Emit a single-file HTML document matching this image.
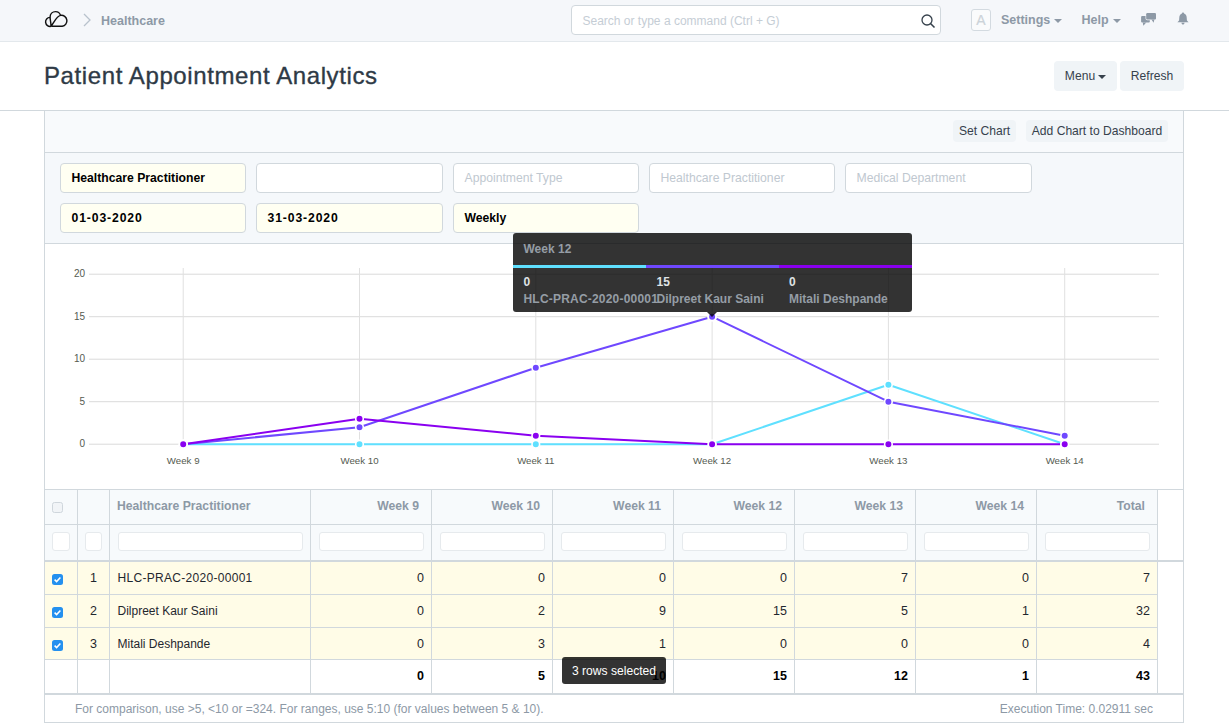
<!DOCTYPE html>
<html><head><meta charset="utf-8">
<style>
*{box-sizing:border-box;margin:0;padding:0}
html,body{width:1229px;height:727px;overflow:hidden;background:#fff;font-family:"Liberation Sans",sans-serif;color:#36414c;position:relative}
.abs{position:absolute}
#nav{left:0;top:0;width:1229px;height:42px;background:#f5f7fa;border-bottom:1px solid #e3e8ec}
.crumb{font-weight:bold;color:#8d99a6;font-size:12.5px}
.search{left:571px;top:5px;width:370px;height:30px;border:1px solid #d1d8dd;border-radius:4px;background:#fff}
.search span{position:absolute;left:10.5px;top:8px;font-size:12px;color:#c5cdd5}
.avatar{left:971px;top:9px;width:20px;height:22px;border:1px solid #d3dae0;border-radius:3px;background:#fafbfc;color:#ccd3d9;font-size:14px;text-align:center;line-height:20px;-webkit-text-stroke:0.2px #ccd3d9}
.navlink{font-weight:bold;color:#8d99a6;font-size:12.5px}
.caret{display:inline-block;width:0;height:0;border-left:4px solid transparent;border-right:4px solid transparent;border-top:4px solid #8d99a6;vertical-align:middle;margin-left:4px}
#title{left:44px;top:62px;font-size:24px;letter-spacing:0.6px;color:#2e3a46;white-space:nowrap;-webkit-text-stroke:0.35px #2e3a46}
.btn{background:#f0f4f7;border-radius:4px;color:#36414c;font-size:12.1px;text-align:center}
#headborder{left:0;top:110px;width:1229px;height:1px;background:#d1d8dd}
#report{left:44px;top:110px;width:1140px;height:613px;border:1px solid #d1d8dd;border-top:none}
#chartact{left:45px;top:111px;width:1138px;height:42px;background:#f8fafc;border-bottom:1px solid #d1d8dd}
#filters{left:45px;top:153px;width:1138px;height:91px;background:#f5f8fb;border-bottom:1px solid #d1d8dd}
.inp{height:30px;border:1px solid #d1d8dd;border-radius:4px;background:#fff;font-size:12.2px;padding-left:10.5px;line-height:29px;white-space:nowrap}
.dg{letter-spacing:0.88px}
.inp.y{background:#fffff2;font-weight:bold;color:#000}
.inp.ph{color:#c0c8d0}
.ax{font-size:10px;fill:#555b51;font-family:"Liberation Sans",sans-serif}
.th{font-weight:bold;color:#8d99a6;font-size:12.2px;white-space:nowrap}
.fi{background:#fff;border:1px solid #e6eaed;border-radius:3px}
.cb{width:11px;height:11px;background:#2490ef;border-radius:2.5px}
.cb svg{display:block}
.td{font-size:12.5px;color:#1f272e;white-space:nowrap}
.td.nm{font-size:12px}
.td.b{font-weight:bold;color:#000}
.foot{font-size:12px;color:#8d99a6;white-space:nowrap}
.toast{background:rgba(0,0,0,0.8);color:#fff;border-radius:3px;font-size:12.1px;text-align:center;line-height:29px}
.tip{left:513px;top:233px;width:399px;height:78.5px;background:rgba(0,0,0,0.8);border-radius:3px}
.tipt{font-weight:bold;color:#959da5;font-size:12px;white-space:nowrap}
.tipv{font-weight:bold;color:#dfe2e5;font-size:12px;white-space:nowrap}
</style></head><body>

<!-- navbar -->
<div id="nav" class="abs"></div>
<svg class="abs" style="left:40px;top:5px" width="35" height="27" viewBox="40 5 35 27">
<path d="M51 26.3 L62.2 26.3 A5 5 0 1 0 60.6 15.4 M60.6 15.4 C59.6 12.6 57.6 11.6 55.6 11.6 C52.2 11.6 50.1 14 50.1 17 C50.1 20.5 51.2 23.5 51 26.3 M60.6 15.4 C56.5 16.2 54.5 21.8 51 26.3 M49.9 17.4 A4.5 4.5 0 1 0 51 26.3" fill="none" stroke="#111" stroke-width="1.45" stroke-linejoin="round"/>
</svg>
<svg class="abs" style="left:82px;top:12px" width="10" height="16" viewBox="0 0 10 16"><path d="M2 2 L8 8 L2 14" fill="none" stroke="#b8c2cc" stroke-width="1.3"/></svg>
<div class="abs crumb" style="left:101px;top:14px">Healthcare</div>

<div class="abs search"><span>Search or type a command (Ctrl + G)</span></div>
<svg class="abs" style="left:920px;top:13px" width="16" height="16" viewBox="0 0 16 16"><circle cx="7" cy="7" r="5" fill="none" stroke="#36414c" stroke-width="1.3"/><path d="M10.5 10.5 L14.5 14.5" stroke="#36414c" stroke-width="1.6"/></svg>

<div class="abs avatar">A</div>
<div class="abs navlink" style="left:1001px;top:13.3px">Settings<span class="caret"></span></div>
<div class="abs navlink" style="left:1081.5px;top:13.3px">Help<span class="caret"></span></div>
<svg class="abs" style="left:1135px;top:5px" width="60" height="30" viewBox="1135 5 60 30">
<rect x="1141.1" y="16" width="8.7" height="6.6" rx="1" fill="#8d99a6"/>
<path d="M1142.8 22.4 L1146.3 22.4 L1143.3 25.8 Z" fill="#8d99a6"/>
<rect x="1146.2" y="13.1" width="9.8" height="6.5" rx="1.1" fill="#8d99a6" stroke="#f5f7fa" stroke-width="1.3" paint-order="stroke"/>
<path d="M1151.4 19.4 L1154.4 19.4 L1153.6 22.8 Z" fill="#8d99a6"/>
<path d="M1183 12.6 C1183.8 12.6 1184.2 13.2 1184.3 13.8 C1186 14.3 1186.6 15.8 1186.7 17.5 L1186.9 20.2 C1187.1 21 1188 21.6 1188.6 22.3 L1177.4 22.3 C1178 21.6 1178.9 21 1179.1 20.2 L1179.3 17.5 C1179.4 15.8 1180 14.3 1181.7 13.8 C1181.8 13.2 1182.2 12.6 1183 12.6 Z M1181.4 22.7 L1184.6 22.7 C1184.4 23.8 1183.8 24.5 1183 24.5 C1182.2 24.5 1181.6 23.8 1181.4 22.7 Z" fill="#8d99a6"/>
</svg>

<!-- page head -->
<div id="title" class="abs">Patient Appointment Analytics</div>
<div class="abs btn" style="left:1054px;top:61px;width:63px;height:30px;line-height:30px">Menu<span class="caret" style="border-top-color:#36414c;margin-left:3px"></span></div>
<div class="abs btn" style="left:1120px;top:61px;width:64px;height:30px;line-height:30px">Refresh</div>
<div id="headborder" class="abs"></div>

<div id="report" class="abs"></div>
<div id="chartact" class="abs"></div>
<div class="abs btn" style="left:953px;top:120px;width:63px;height:22px;line-height:22px;font-size:12.1px">Set Chart</div>
<div class="abs btn" style="left:1026px;top:120px;width:142px;height:22px;line-height:22px;font-size:12.1px">Add Chart to Dashboard</div>

<div id="filters" class="abs"></div>
<div class="abs inp y" style="left:60px;top:163px;width:186px">Healthcare Practitioner</div>
<div class="abs inp" style="left:256px;top:163px;width:187px"></div>
<div class="abs inp ph" style="left:453px;top:163px;width:186px">Appointment Type</div>
<div class="abs inp ph" style="left:649px;top:163px;width:186px">Healthcare Practitioner</div>
<div class="abs inp ph" style="left:845px;top:163px;width:187px">Medical Department</div>
<div class="abs inp y" style="left:60px;top:203px;width:186px" ><span class="dg">01-03-2020</span></div>
<div class="abs inp y" style="left:256px;top:203px;width:187px" ><span class="dg">31-03-2020</span></div>
<div class="abs inp y" style="left:453px;top:203px;width:186px">Weekly</div>

<!-- CHART -->
<svg class="abs" style="left:0;top:0" width="1229" height="727" viewBox="0 0 1229 727">
<line x1="89" y1="444.2" x2="1159" y2="444.2" stroke="#dadada" stroke-width="1"/>
<text x="85" y="447.2" text-anchor="end" class="ax">0</text>
<line x1="89" y1="401.7" x2="1159" y2="401.7" stroke="#dadada" stroke-width="1"/>
<text x="85" y="404.7" text-anchor="end" class="ax">5</text>
<line x1="89" y1="359.2" x2="1159" y2="359.2" stroke="#dadada" stroke-width="1"/>
<text x="85" y="362.2" text-anchor="end" class="ax">10</text>
<line x1="89" y1="316.7" x2="1159" y2="316.7" stroke="#dadada" stroke-width="1"/>
<text x="85" y="319.7" text-anchor="end" class="ax">15</text>
<line x1="89" y1="274.2" x2="1159" y2="274.2" stroke="#dadada" stroke-width="1"/>
<text x="85" y="277.2" text-anchor="end" class="ax">20</text>
<line x1="183.2" y1="268" x2="183.2" y2="447" stroke="#e0e0e0" stroke-width="1"/>
<text x="183.2" y="464" text-anchor="middle" class="ax" style="font-size:9.7px">Week 9</text>
<line x1="359.5" y1="268" x2="359.5" y2="447" stroke="#e0e0e0" stroke-width="1"/>
<text x="359.5" y="464" text-anchor="middle" class="ax" style="font-size:9.7px">Week 10</text>
<line x1="535.8" y1="268" x2="535.8" y2="447" stroke="#e0e0e0" stroke-width="1"/>
<text x="535.8" y="464" text-anchor="middle" class="ax" style="font-size:9.7px">Week 11</text>
<line x1="712.1" y1="268" x2="712.1" y2="447" stroke="#e0e0e0" stroke-width="1"/>
<text x="712.1" y="464" text-anchor="middle" class="ax" style="font-size:9.7px">Week 12</text>
<line x1="888.4" y1="268" x2="888.4" y2="447" stroke="#e0e0e0" stroke-width="1"/>
<text x="888.4" y="464" text-anchor="middle" class="ax" style="font-size:9.7px">Week 13</text>
<line x1="1064.7" y1="268" x2="1064.7" y2="447" stroke="#e0e0e0" stroke-width="1"/>
<text x="1064.7" y="464" text-anchor="middle" class="ax" style="font-size:9.7px">Week 14</text>
<polyline points="183.2,444.2 359.5,444.2 535.8,444.2 712.1,444.2 888.4,384.7 1064.7,444.2" fill="none" stroke="#5fe0ff" stroke-width="2" stroke-linejoin="round"/>
<polyline points="183.2,444.2 359.5,427.2 535.8,367.7 712.1,316.7 888.4,401.7 1064.7,435.7" fill="none" stroke="#6f48ff" stroke-width="2" stroke-linejoin="round"/>
<polyline points="183.2,444.2 359.5,418.7 535.8,435.7 712.1,444.2 888.4,444.2 1064.7,444.2" fill="none" stroke="#8a00f0" stroke-width="2" stroke-linejoin="round"/>
<circle cx="183.2" cy="444.2" r="3.8" fill="#5fe0ff" stroke="#fff" stroke-width="1.6"/>
<circle cx="359.5" cy="444.2" r="3.8" fill="#5fe0ff" stroke="#fff" stroke-width="1.6"/>
<circle cx="535.8" cy="444.2" r="3.8" fill="#5fe0ff" stroke="#fff" stroke-width="1.6"/>
<circle cx="712.1" cy="444.2" r="3.8" fill="#5fe0ff" stroke="#fff" stroke-width="1.6"/>
<circle cx="888.4" cy="384.7" r="3.8" fill="#5fe0ff" stroke="#fff" stroke-width="1.6"/>
<circle cx="1064.7" cy="444.2" r="3.8" fill="#5fe0ff" stroke="#fff" stroke-width="1.6"/>
<circle cx="183.2" cy="444.2" r="3.8" fill="#6f48ff" stroke="#fff" stroke-width="1.6"/>
<circle cx="359.5" cy="427.2" r="3.8" fill="#6f48ff" stroke="#fff" stroke-width="1.6"/>
<circle cx="535.8" cy="367.7" r="3.8" fill="#6f48ff" stroke="#fff" stroke-width="1.6"/>
<circle cx="712.1" cy="316.7" r="4" fill="#6f48ff" stroke="#fff" stroke-width="2"/>
<circle cx="888.4" cy="401.7" r="3.8" fill="#6f48ff" stroke="#fff" stroke-width="1.6"/>
<circle cx="1064.7" cy="435.7" r="3.8" fill="#6f48ff" stroke="#fff" stroke-width="1.6"/>
<circle cx="183.2" cy="444.2" r="3.8" fill="#8a00f0" stroke="#fff" stroke-width="1.6"/>
<circle cx="359.5" cy="418.7" r="3.8" fill="#8a00f0" stroke="#fff" stroke-width="1.6"/>
<circle cx="535.8" cy="435.7" r="3.8" fill="#8a00f0" stroke="#fff" stroke-width="1.6"/>
<circle cx="712.1" cy="444.2" r="3.8" fill="#8a00f0" stroke="#fff" stroke-width="1.6"/>
<circle cx="888.4" cy="444.2" r="3.8" fill="#8a00f0" stroke="#fff" stroke-width="1.6"/>
<circle cx="1064.7" cy="444.2" r="3.8" fill="#8a00f0" stroke="#fff" stroke-width="1.6"/>
</svg>

<!-- TABLE -->
<div class="abs" style="left:44px;top:489px;width:1114px;height:71px;background:#f7fafc"></div>
<div class="abs" style="left:44px;top:562px;width:1114px;height:97px;background:#fffce7"></div>
<div class="abs" style="left:44px;top:489px;width:1140px;height:1px;background:#d1d8dd"></div>
<div class="abs" style="left:44px;top:524px;width:1114px;height:1px;background:#d1d8dd"></div>
<div class="abs" style="left:44px;top:560px;width:1140px;height:2px;background:#d1d8dd"></div>
<div class="abs" style="left:44px;top:594px;width:1114px;height:1px;background:#d1d8dd"></div>
<div class="abs" style="left:44px;top:627px;width:1114px;height:1px;background:#d1d8dd"></div>
<div class="abs" style="left:44px;top:659px;width:1114px;height:1px;background:#d1d8dd"></div>
<div class="abs" style="left:44px;top:693px;width:1140px;height:2px;background:#d1d8dd"></div>
<div class="abs" style="left:44px;top:489px;width:1px;height:206px;background:#d1d8dd"></div>
<div class="abs" style="left:77px;top:489px;width:1px;height:206px;background:#d1d8dd"></div>
<div class="abs" style="left:109px;top:489px;width:1px;height:206px;background:#d1d8dd"></div>
<div class="abs" style="left:310px;top:489px;width:1px;height:206px;background:#d1d8dd"></div>
<div class="abs" style="left:431px;top:489px;width:1px;height:206px;background:#d1d8dd"></div>
<div class="abs" style="left:552px;top:489px;width:1px;height:206px;background:#d1d8dd"></div>
<div class="abs" style="left:673px;top:489px;width:1px;height:206px;background:#d1d8dd"></div>
<div class="abs" style="left:794px;top:489px;width:1px;height:206px;background:#d1d8dd"></div>
<div class="abs" style="left:915px;top:489px;width:1px;height:206px;background:#d1d8dd"></div>
<div class="abs" style="left:1036px;top:489px;width:1px;height:206px;background:#d1d8dd"></div>
<div class="abs" style="left:1157px;top:489px;width:1px;height:206px;background:#d1d8dd"></div>
<div class="abs th" style="left:117.0px;top:498.8px">Healthcare Practitioner</div>
<div class="abs th" style="left:310.5px;width:108.5px;top:498.8px;text-align:right">Week 9</div>
<div class="abs th" style="left:431.5px;width:108.5px;top:498.8px;text-align:right">Week 10</div>
<div class="abs th" style="left:552.5px;width:108.5px;top:498.8px;text-align:right">Week 11</div>
<div class="abs th" style="left:673.5px;width:108.5px;top:498.8px;text-align:right">Week 12</div>
<div class="abs th" style="left:794.5px;width:108.5px;top:498.8px;text-align:right">Week 13</div>
<div class="abs th" style="left:915.5px;width:108.5px;top:498.8px;text-align:right">Week 14</div>
<div class="abs th" style="left:1036.5px;width:108.5px;top:498.8px;text-align:right">Total</div>
<div class="abs" style="left:52px;top:502px;width:11px;height:11px;border:1px solid #cfd6dc;border-radius:2.5px;background:#f1f4f7"></div>
<div class="abs fi" style="left:52px;top:532px;width:18px;height:19px"></div>
<div class="abs fi" style="left:85px;top:532px;width:17px;height:19px"></div>
<div class="abs fi" style="left:117.5px;top:532px;width:185.0px;height:19px"></div>
<div class="abs fi" style="left:318.5px;top:532px;width:105.0px;height:19px"></div>
<div class="abs fi" style="left:439.5px;top:532px;width:105.0px;height:19px"></div>
<div class="abs fi" style="left:560.5px;top:532px;width:105.0px;height:19px"></div>
<div class="abs fi" style="left:681.5px;top:532px;width:105.0px;height:19px"></div>
<div class="abs fi" style="left:802.5px;top:532px;width:105.0px;height:19px"></div>
<div class="abs fi" style="left:923.5px;top:532px;width:105.0px;height:19px"></div>
<div class="abs fi" style="left:1044.5px;top:532px;width:105.0px;height:19px"></div>
<div class="abs cb" style="left:52px;top:573.8px"><svg width="11" height="11" viewBox="0 0 11 11"><path d="M2.6 5.6 L4.6 7.6 L8.4 3.6" fill="none" stroke="#fff" stroke-width="1.5"/></svg></div>
<div class="abs td" style="left:77px;width:33px;top:571px;text-align:center">1</div>
<div class="abs td nm" style="left:117.5px;top:571.3px"><span style="letter-spacing:0.3px">HLC-PRAC-2020-00001</span></div>
<div class="abs td" style="left:310.5px;width:113.5px;top:571px;text-align:right">0</div>
<div class="abs td" style="left:431.5px;width:113.5px;top:571px;text-align:right">0</div>
<div class="abs td" style="left:552.5px;width:113.5px;top:571px;text-align:right">0</div>
<div class="abs td" style="left:673.5px;width:113.5px;top:571px;text-align:right">0</div>
<div class="abs td" style="left:794.5px;width:113.5px;top:571px;text-align:right">7</div>
<div class="abs td" style="left:915.5px;width:113.5px;top:571px;text-align:right">0</div>
<div class="abs td" style="left:1036.5px;width:113.5px;top:571px;text-align:right">7</div>
<div class="abs cb" style="left:52px;top:606.8px"><svg width="11" height="11" viewBox="0 0 11 11"><path d="M2.6 5.6 L4.6 7.6 L8.4 3.6" fill="none" stroke="#fff" stroke-width="1.5"/></svg></div>
<div class="abs td" style="left:77px;width:33px;top:604.3px;text-align:center">2</div>
<div class="abs td nm" style="left:117.5px;top:603.5px">Dilpreet Kaur Saini</div>
<div class="abs td" style="left:310.5px;width:113.5px;top:604.3px;text-align:right">0</div>
<div class="abs td" style="left:431.5px;width:113.5px;top:604.3px;text-align:right">2</div>
<div class="abs td" style="left:552.5px;width:113.5px;top:604.3px;text-align:right">9</div>
<div class="abs td" style="left:673.5px;width:113.5px;top:604.3px;text-align:right">15</div>
<div class="abs td" style="left:794.5px;width:113.5px;top:604.3px;text-align:right">5</div>
<div class="abs td" style="left:915.5px;width:113.5px;top:604.3px;text-align:right">1</div>
<div class="abs td" style="left:1036.5px;width:113.5px;top:604.3px;text-align:right">32</div>
<div class="abs cb" style="left:52px;top:640.2px"><svg width="11" height="11" viewBox="0 0 11 11"><path d="M2.6 5.6 L4.6 7.6 L8.4 3.6" fill="none" stroke="#fff" stroke-width="1.5"/></svg></div>
<div class="abs td" style="left:77px;width:33px;top:637.3px;text-align:center">3</div>
<div class="abs td nm" style="left:117.5px;top:636.5px">Mitali Deshpande</div>
<div class="abs td" style="left:310.5px;width:113.5px;top:637.3px;text-align:right">0</div>
<div class="abs td" style="left:431.5px;width:113.5px;top:637.3px;text-align:right">3</div>
<div class="abs td" style="left:552.5px;width:113.5px;top:637.3px;text-align:right">1</div>
<div class="abs td" style="left:673.5px;width:113.5px;top:637.3px;text-align:right">0</div>
<div class="abs td" style="left:794.5px;width:113.5px;top:637.3px;text-align:right">0</div>
<div class="abs td" style="left:915.5px;width:113.5px;top:637.3px;text-align:right">0</div>
<div class="abs td" style="left:1036.5px;width:113.5px;top:637.3px;text-align:right">4</div>
<div class="abs td b" style="left:310.5px;width:113.5px;top:669px;text-align:right">0</div>
<div class="abs td b" style="left:431.5px;width:113.5px;top:669px;text-align:right">5</div>
<div class="abs td b" style="left:552.5px;width:113.5px;top:669px;text-align:right">10</div>
<div class="abs td b" style="left:673.5px;width:113.5px;top:669px;text-align:right">15</div>
<div class="abs td b" style="left:794.5px;width:113.5px;top:669px;text-align:right">12</div>
<div class="abs td b" style="left:915.5px;width:113.5px;top:669px;text-align:right">1</div>
<div class="abs td b" style="left:1036.5px;width:113.5px;top:669px;text-align:right">43</div>
<div class="abs foot" style="left:75px;top:701.5px">For comparison, use &gt;5, &lt;10 or =324. For ranges, use 5:10 (for values between 5 &amp; 10).</div>
<div class="abs foot" style="left:900px;width:253px;top:701.5px;text-align:right">Execution Time: 0.02911 sec</div>
<div class="abs toast" style="left:562px;top:657px;width:104px;height:27px">3 rows selected</div>
<div class="abs tip"></div>
<div class="abs" style="left:707px;top:311.5px;width:0;height:0;border-left:5px solid transparent;border-right:5px solid transparent;border-top:5px solid rgba(0,0,0,0.8)"></div>
<div class="abs tipt" style="left:523.5px;top:242px">Week 12</div>
<div class="abs" style="left:513px;top:265px;width:133px;height:3px;background:#5fe0ff"></div>
<div class="abs" style="left:646px;top:265px;width:133px;height:3px;background:#6f48ff"></div>
<div class="abs" style="left:779px;top:265px;width:133px;height:3px;background:#8a00f0"></div>
<div class="abs tipv" style="left:523.5px;top:275px">0</div>
<div class="abs tipv" style="left:656.5px;top:275px">15</div>
<div class="abs tipv" style="left:789px;top:275px">0</div>
<div class="abs tipt" style="left:523.5px;top:292px" ><span style="letter-spacing:0.2px">HLC-PRAC-2020-00001</span></div>
<div class="abs tipt" style="left:656.5px;top:292px">Dilpreet Kaur Saini</div>
<div class="abs tipt" style="left:789px;top:292px">Mitali Deshpande</div>


</body></html>
